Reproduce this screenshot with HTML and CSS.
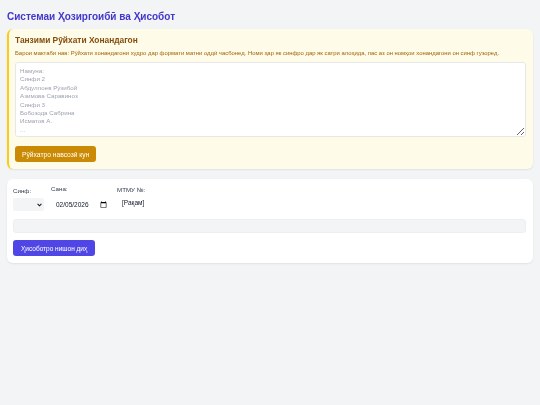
FILE: index.html
```html
<!DOCTYPE html>
<html lang="tg">
<head>
<meta charset="utf-8">
<title>Системаи Ҳозиргоибӣ ва Ҳисобот</title>
<link rel="stylesheet" href="styles.css">
</head>
<body>
<h1 class="title">Системаи Ҳозиргоибӣ ва Ҳисобот</h1>

<section class="card card-setup">
  <h2 class="setup-heading">Танзими Рӯйхати Хонандагон</h2>
  <p class="setup-note">Барои мактаби нав: Рӯйхати хонандагони худро дар формати матни оддӣ часбонед. Номи ҳар як синфро дар як сатри алоҳида, пас аз он номҳои хонандагони он синф гузоред.</p>
  <textarea class="roster" placeholder="Намуна:&#10;Синфи 2&#10;Абдуллоев Рӯзибой&#10;Азимова Саравиноз&#10;Синфи 3&#10;Бобозода Сабрина&#10;Исматов А.&#10;..."></textarea>
  <button class="btn btn-amber">Рӯйхатро навсозӣ кун</button>
</section>

<section class="card card-report">
  <div class="fields">
    <label class="field field-class">
      <span class="field-label">Синф:</span>
      <span class="select-wrap">
        <select class="select"><option></option></select>
        <svg class="chevron" width="5" height="4" viewBox="0 0 5 4"><path d="M0.6 0.8 L2.5 2.8 L4.4 0.8" fill="none" stroke="#111827" stroke-width="1.1"/></svg>
      </span>
    </label>
    <label class="field field-date">
      <span class="field-label">Сана:</span>
      <input class="date" type="date" value="2026-02-05">
    </label>
    <div class="field field-num">
      <span class="field-label">МТМУ №:</span>
      <span class="num">[Рақам]</span>
    </div>
  </div>
  <div class="status-bar"></div>
  <button class="btn btn-indigo">Ҳисоботро нишон диҳ</button>
</section>
</body>
</html>
```

FILE: styles.css
```css
* { box-sizing: border-box; }
html, body { margin: 0; padding: 0; }
body {
  background: #f3f4f6;
  font-family: "Liberation Sans", Arial, sans-serif;
  padding: 7px 7px;
  color: #111827;
}
.title {
  font-size: 10px;
  font-weight: bold;
  color: #4338ca;
  margin: 3px 0 5px 0;
  line-height: 14px;
}
.card {
  border-radius: 6px;
  box-shadow: 0 1px 2px rgba(0,0,0,0.08);
}
.card-setup {
  background: #fefce8;
  border-left: 2px solid #facc15;
  padding: 5px 7px 7px 6px;
}
.setup-heading {
  margin: 0;
  font-size: 8.4px;
  line-height: 12px;
  color: #854d0e;
  font-weight: bold;
}
.setup-note {
  margin: 3px 0 4px 0;
  font-size: 5.9px;
  line-height: 9px;
  color: #a16207;
}
.roster {
  display: block;
  width: 100%;
  height: 75px;
  resize: vertical;
  border: 1px solid #e5e7eb;
  border-radius: 3px;
  background: #ffffff;
  padding: 4px 4px 3px;
  font-family: "Liberation Sans", Arial, sans-serif;
  font-size: 6.2px;
  line-height: 8.4px;
  margin: 0;
}
.roster::placeholder { color: #9ca3af; }
.btn {
  border: none;
  border-radius: 3px;
  color: #ffffff;
  font-family: "Liberation Sans", Arial, sans-serif;
  height: 16px;
  display: block;
}
.btn-amber {
  background: #ca8a04;
  margin-top: 9px;
  font-size: 6.7px;
  padding: 0 7px;
}
.card-report {
  margin-top: 10px;
  background: #ffffff;
  padding: 5px 7px 7px 6px;
}
.fields {
  display: flex;
  gap: 6px;
  align-items: flex-start;
}
.field {
  display: flex;
  flex-direction: column;
  font-size: 6.2px;
  color: #374151;
}
.field-label { line-height: 8px; }
.field-class { padding-top: 3px; width: 32px; }
.field-class .field-label { margin-bottom: 3px; }
.field-date { width: 60px; padding-top: 1px; }
.field-num { padding-top: 2px; }
.select-wrap {
  position: relative;
  display: block;
  width: 31px;
  height: 13px;
}
.select {
  -webkit-appearance: none;
  appearance: none;
  display: block;
  width: 31px;
  height: 13px;
  background: #f3f4f6;
  border: none;
  border-radius: 2px;
  font-size: 6px;
}
.chevron {
  position: absolute;
  left: 24px;
  top: 5px;
  pointer-events: none;
}
.date {
  margin-top: 6px;
  border: none;
  background: transparent;
  font-family: "Liberation Sans", Arial, sans-serif;
  font-size: 6.5px;
  color: #111827;
  width: 56px;
  padding: 0 0 0 5px;
  height: 10px;
}
.date::-webkit-datetime-edit-fields-wrapper { padding: 0; }
.date::-webkit-datetime-edit-month-field,
.date::-webkit-datetime-edit-day-field,
.date::-webkit-datetime-edit-year-field { padding: 0; }
.date::-webkit-datetime-edit-text { padding: 0; }
.date::-webkit-calendar-picker-indicator { margin-left: 0; padding: 0; width: 7px; height: 7px; }
.num {
  margin-top: 5px;
  margin-left: 5px;
  font-size: 6.5px;
  color: #111827;
}
.status-bar {
  margin-top: 8px;
  height: 14px;
  background: #f3f4f6;
  border: 1px solid #eceef1;
  border-radius: 3px;
}
.btn-indigo {
  background: #4f46e5;
  margin-top: 7px;
  font-size: 6.5px;
  padding: 0 8px;
}
```
